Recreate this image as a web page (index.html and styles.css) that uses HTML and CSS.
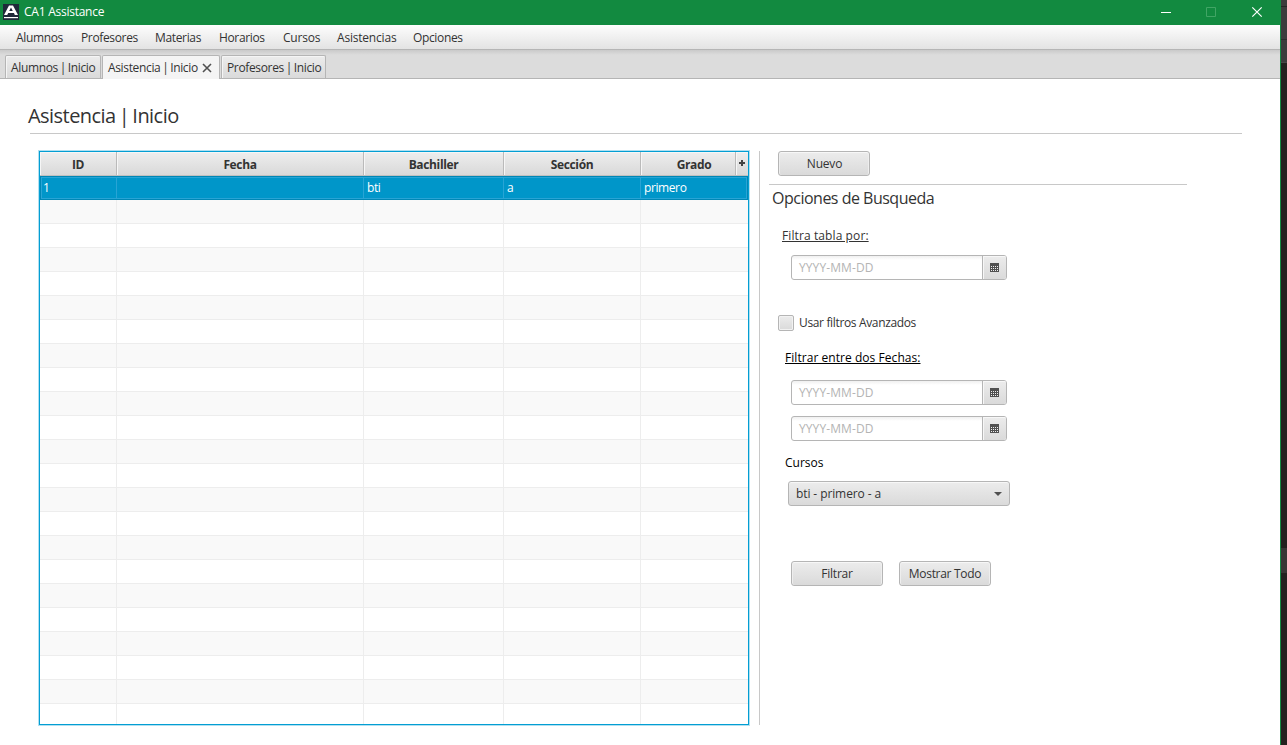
FILE: index.html
```html
<!DOCTYPE html>
<html lang="es">
<head>
<meta charset="utf-8">
<title>CA1 Assistance</title>
<link rel="stylesheet" href="styles.css">
</head>
<body>
<div class="screen">
  <div class="window">
    <header class="titlebar">
      <svg class="logo" width="16" height="16" viewBox="0 0 16 16"><rect width="16" height="16" fill="#1f2a3a"/><path d="M1 11 6 1.500h4L15 11h-3.200l-.8-2H5.200l-1 2zM6.200 7h3.600L8 3.400z" fill="#fff"/><path d="M1 13h14v1.200H1z" fill="#fff"/></svg>
      <span class="app-name">CA1 Assistance</span>
      <svg class="controls" width="104" height="12" viewBox="0 0 104 12"><path d="M1 6.500h10" stroke="#fff"/><path d="M46.500 1.500h9v9h-9z" fill="none" stroke="#41a565"/><path d="m92.300 1.300 9.400 9.400m0-9.400-9.400 9.400" stroke="#fff" stroke-width="1.200"/></svg>
    </header>
    <nav class="menubar">
      <span class="m1">Alumnos</span><span class="m2">Profesores</span><span class="m3">Materias</span><span class="m4">Horarios</span><span class="m5">Cursos</span><span class="m6">Asistencias</span><span class="m7">Opciones</span>
    </nav>
    <div class="tabs">
      <div class="tab t1"><span>Alumnos | Inicio</span></div>
      <div class="tab t2 active"><span>Asistencia | Inicio</span><svg width="10" height="10" viewBox="0 0 10 10"><path d="m1 1 8 8m0-8L1 9" stroke="#505050" stroke-width="1.600"/></svg></div>
      <div class="tab t3"><span>Profesores | Inicio</span></div>
    </div>
    <main class="page">
      <h1><span>Asistencia | Inicio</span></h1>
      <div class="content">
        <div class="table">
          <div class="row head"><div>ID</div><div>Fecha</div><div>Bachiller</div><div>Sección</div><div class="last">Grado</div><div class="plus"><svg width="6" height="6" viewBox="0 0 6 6"><path d="M0 3h6M3 0v6" stroke="#444" stroke-width="2"/></svg></div></div>
          <div class="row selected"><div>1</div><div></div><div>bti</div><div>a</div><div>primero</div></div>
          <div class="rows">
            <div class="cols"><i></i><i></i><i></i><i></i><i></i></div>
          </div>
        </div>
        <aside class="panel">
          <div class="top"><button class="btn new">Nuevo</button></div>
          <h2><span>Opciones de Busqueda</span></h2>
          <div class="label by"><span>Filtra tabla por:</span></div>
          <div class="date"><span>YYYY-MM-DD</span><b><svg width="9" height="9" viewBox="0 0 9 9"><path d="M0 0h9v9H0z" fill="#505050"/><path d="M1 3.500h7M1 5.500h7M1 7.500h7" stroke="#eee" stroke-dasharray="1 1"/></svg></b></div>
          <label class="check"><i></i><span>Usar filtros Avanzados</span></label>
          <div class="label between"><span>Filtrar entre dos Fechas:</span></div>
          <div class="date"><span>YYYY-MM-DD</span><b><svg width="9" height="9" viewBox="0 0 9 9"><path d="M0 0h9v9H0z" fill="#505050"/><path d="M1 3.500h7M1 5.500h7M1 7.500h7" stroke="#eee" stroke-dasharray="1 1"/></svg></b></div>
          <div class="date second"><span>YYYY-MM-DD</span><b><svg width="9" height="9" viewBox="0 0 9 9"><path d="M0 0h9v9H0z" fill="#505050"/><path d="M1 3.500h7M1 5.500h7M1 7.500h7" stroke="#eee" stroke-dasharray="1 1"/></svg></b></div>
          <div class="label courses"><span>Cursos</span></div>
          <div class="combo"><span>bti - primero - a</span><svg width="8" height="4" viewBox="0 0 8 4"><path d="M0 0h8L4 4z" fill="#505050"/></svg></div>
          <div class="actions"><button class="btn">Filtrar</button><button class="btn all">Mostrar Todo</button></div>
        </aside>
      </div>
    </main>
  </div>
  <div class="backdrop"><i class="b1"></i><i class="b2"></i><i class="b3"></i><i class="b4"></i></div>
</div>
</body>
</html>
```
FILE: styles.css
```css
* { box-sizing: border-box; }
body { margin: 0; font: 12px/16px "Open Sans", "Noto Sans", sans-serif; color: #333; letter-spacing: -0.2px; }
span { white-space: nowrap; }
svg { display: block; flex: none; }
.screen { display: flex; width: 1287px; height: 745px; overflow: hidden; background: #fff; }
.window { width: 1281px; border-right: 1px solid #128a40; display: flex; flex-direction: column; }
.titlebar { height: 25px; background: #128a40; color: #fff; display: flex; align-items: center; padding: 0 16px 1px 3px; }
.app-name { margin-left: 5px; flex: 1; letter-spacing: -.25px; }

.menubar { height: 25px; display: flex; align-items: center; padding: 2px 0 0 16px; background: linear-gradient(#fdfdfd, #e3e3e3); border-bottom: 1px solid #b5b5b5; letter-spacing: -.35px; }
.m1 { width: 65px; } .m2 { width: 74px; } .m3 { width: 64px; } .m4 { width: 64px; }
.m5 { width: 54px; letter-spacing: -.2px; } .m6 { width: 76px; letter-spacing: -.2px; }

.tabs { height: 29px; padding: 5px 0 0 5px; display: flex; gap: 2px; background: linear-gradient(#cacaca, #dcdcdc 5px); border-bottom: 1px solid #b5b5b5; }
.tab { height: 23px; border: 1px solid #b5b5b5; border-bottom: 0; border-radius: 2px 2px 0 0; background: linear-gradient(#ececec, #dadada); box-shadow: inset 1px 1px #f5f5f5; display: flex; align-items: center; padding: 2px 0 0 5px; word-spacing: -1px; letter-spacing: -.35px; }
.t1 { width: 96px; }
.t3 { width: 105px; }
.tab.active { width: 118px; height: 24px; background: #f4f4f4; gap: 4px; padding-bottom: 1px; margin: 0 -1px 0 -1px; }
.tab.active svg { margin-top: -1px; }

.page { flex: 1; }
h1 { margin: 0 38px 0 30px; height: 55px; border-bottom: 1px solid #c8c8c8; font-size: 20px; line-height: 28px; font-weight: 400; padding-top: 23px; letter-spacing: -.55px; word-spacing: -1.500px; }
h1 span { margin-left: -2px; }
.content { display: flex; padding: 17px 0 0 39px; }
.table { width: 710px; height: 574px; border: 1px solid #039ed3; box-shadow: 0 0 0 1px #b0e0f1; display: flex; flex-direction: column; }
.row { display: grid; grid-template-columns: 77px 247px 140px 137px 1fr; height: 24px; flex: none; }
.row > div { padding: 4px 3px; border-right: 1px solid #28a4d5; }
.row > div:last-child { border-right: 0; }
.head { grid-template-columns: 77px 247px 140px 137px 95px 1fr; background: linear-gradient(#eee, #d9d9d9); font-weight: 700; text-align: center; border-bottom: 1px solid #c0c0c0; letter-spacing: -.35px; }
.head > div { padding: 5px 3px 0; border-right-color: #bababa; box-shadow: inset 1px 1px #f6f6f6; }
.head .last { padding-left: 15px; }
.head .plus { padding: 8px 3px 0; }
.selected { background: #0096c9; color: #fff; border: 1px solid #0087b5; box-shadow: inset 0 0 0 1px #28a4d5; grid-template-columns: 76px 247px 140px 137px 1fr; letter-spacing: -.4px; }
.selected > div { padding: 3px 3px 0; }
.selected > div:first-child { padding-left: 2px; }
.rows { flex: 1; background: repeating-linear-gradient(#f9f9f9 0 23px, #ededed 23px 24px, #fff 24px 47px, #ededed 47px 48px); }
.cols { height: 100%; display: grid; grid-template-columns: 77px 247px 140px 137px 1fr; }
.cols i { border-right: 1px solid #ededed; }
.cols i:last-child { border: 0; }

.panel { width: 438px; height: 574px; margin-left: 10px; border-left: 1px solid #c8c8c8; }
.btn { font: inherit; letter-spacing: inherit; color: #333; width: 92px; height: 25px; padding: 1px 0 0; border: 1px solid #b5b5b5; border-radius: 3px; background: linear-gradient(#ececec, #dadada); box-shadow: inset 0 1px #f7f7f7, inset 1px 0 #eee, inset -1px 0 #eee; }
.all { letter-spacing: -.3px; }
.top { height: 34px; margin-left: 9px; padding-left: 9px; border-bottom: 1px solid #c8c8c8; width: 418px; }
.top .btn { display: block; padding-left: 1px; }
h2 { margin: 2px 0 0 12px; font-size: 16px; line-height: 22px; font-weight: 400; letter-spacing: -.5px; }
.label { height: 16px; text-decoration: underline; color: #000; }
.by { margin: 19px 0 0 22px; color: #333; letter-spacing: .1px; }
.date { width: 216px; height: 25px; margin: 11px 0 0 31px; border: 1px solid #b5b5b5; border-radius: 3px; display: flex; align-items: center; background: linear-gradient(#f0f0f0, #fff 4px); color: #b4b4b4; overflow: hidden; }
.date span { flex: 1; padding-left: 7px; letter-spacing: .1px; }
.date b { width: 24px; height: 23px; border-left: 1px solid #b5b5b5; background: linear-gradient(#ececec, #dadada); box-shadow: inset 1px 1px #f7f7f7; display: flex; align-items: center; justify-content: center; }
.check { display: flex; align-items: center; height: 16px; margin: 35px 0 0 18px; gap: 5px; letter-spacing: -.35px; }
.check i { width: 16px; height: 16px; border: 1px solid #b5b5b5; border-radius: 2px; background: linear-gradient(#ececec, #dadada); box-shadow: inset 0 0 0 1px #f2f2f2; }
.between { margin: 19px 0 0 25px; letter-spacing: .05px; }
.between + .date { margin-top: 14px; }
.date.second { margin-top: 11px; }
.courses { margin: 14px 0 0 25px; text-decoration: none; letter-spacing: 0; }
.combo { width: 222px; height: 25px; margin: 10px 0 0 28px; padding: 0 7px; border: 1px solid #b5b5b5; border-radius: 3px; background: linear-gradient(#ececec, #dadada); box-shadow: inset 0 1px #f7f7f7; display: flex; align-items: center; justify-content: space-between; letter-spacing: -.1px; }
.combo span { padding-top: 1px; }
.actions { display: flex; gap: 16px; margin: 55px 0 0 31px; }

.backdrop { width: 6px; background: #24211f; display: flex; flex-direction: column; }
.b1 { height: 63px; background: linear-gradient(#3c3c3c 6px, #252525 6px 7px, #3c3c3c 7px 39px, #2c2c2c 39px 40px, #3c3c3c 40px 62px, #484848 62px); }
.b3 { height: 25px; background: #383634; }
.b2 { height: 485px; }
```
